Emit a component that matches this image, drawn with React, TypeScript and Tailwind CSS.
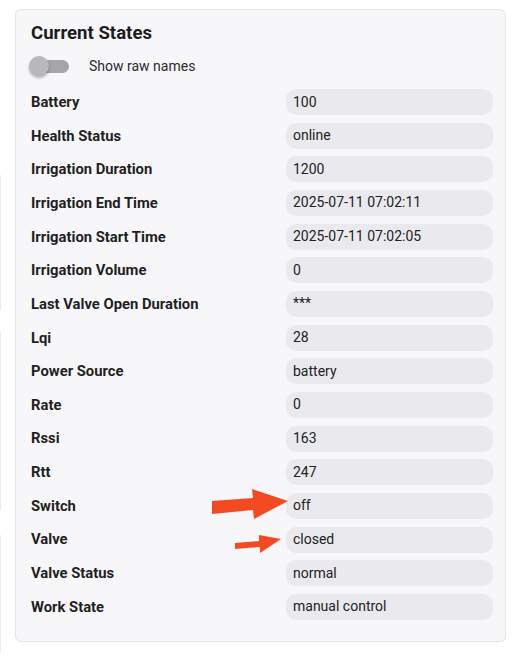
import React from "react";

const rows: [string, string][] = [
  ["Battery", "100"],
  ["Health Status", "online"],
  ["Irrigation Duration", "1200"],
  ["Irrigation End Time", "2025-07-11 07:02:11"],
  ["Irrigation Start Time", "2025-07-11 07:02:05"],
  ["Irrigation Volume", "0"],
  ["Last Valve Open Duration", "***"],
  ["Lqi", "28"],
  ["Power Source", "battery"],
  ["Rate", "0"],
  ["Rssi", "163"],
  ["Rtt", "247"],
  ["Switch", "off"],
  ["Valve", "closed"],
  ["Valve Status", "normal"],
  ["Work State", "manual control"],
];

function Arrow({ big }: { big?: boolean }) {
  if (big) {
    return (
      <svg
        className="absolute left-[-74px] top-[-4px]"
        width="78"
        height="32"
        viewBox="0 0 78 32"
      >
        <polygon
          points="0,12 41,9 40,0 76,12 42,30 41,21 0,25"
          fill="#f44a22"
        />
      </svg>
    );
  }
  return (
    <svg
      className="absolute left-[-51px] top-[6px]"
      width="48"
      height="20"
      viewBox="0 0 48 20"
    >
      <polygon points="0,10 24,8 24,2 46,6 25,20 25,14 0,16" fill="#f44a22" />
    </svg>
  );
}

export default function App() {
  return (
    <div
      className="flex min-h-[655px] w-[516px] bg-white text-[#212121]"
      style={{ fontFamily: "Roboto, 'Liberation Sans', sans-serif" }}
    >
      <div className="flex w-[1px] flex-col">
        <div className="h-[175px]" />
        <div className="h-[135px] bg-[#ececf0]" />
        <div className="h-[22px]" />
        <div className="h-[178px] bg-[#ececf0]" />
        <div className="h-[25px]" />
        <div className="h-[118px] bg-[#ececf0]" />
      </div>
      <div className="ml-[14px] mt-[9px] mb-[14px] flex w-[491px] flex-col rounded-[6px] border border-[#e4e4e9] bg-[#f7f7fa] pl-[15px] pr-[12px] pt-[11px] pb-[21px]">
        <div className="h-[24px] text-[18.6px] font-bold leading-[24px] text-[#1c1c1c]">
          Current States
        </div>
        <div className="mt-[2px] flex h-[38px] items-center">
          <div className="relative ml-[-2px] h-[20px] w-[40px]">
            <div className="absolute left-[6px] top-[4px] h-[13px] w-[34px] rounded-full bg-[#a5a5aa]" />
            <div className="absolute left-0 top-0 h-[20px] w-[20px] rounded-full bg-[#b9b9bb] shadow-[0_2px_3px_rgba(0,0,0,0.3)]" />
          </div>
          <span className="ml-[20px] text-[14px] text-[#2a2a2a]">
            Show raw names
          </span>
        </div>
        <div className="mt-[4px] flex flex-col gap-y-[7.67px]">
          {rows.map(([k, v]) => (
            <div key={k} className="flex h-[26px] items-center">
              <div className="flex-1 text-[14.8px] font-bold text-[#1f1f1f]">
                {k}
              </div>
              <div className="relative flex h-[26px] w-[207px] items-center rounded-[10px] bg-[#eaeaee] pl-[7px] text-[14px] text-[#222]">
                {k === "Switch" && <Arrow big />}
                {k === "Valve" && <Arrow />}
                {v}
              </div>
            </div>
          ))}
        </div>
      </div>
    </div>
  );
}
